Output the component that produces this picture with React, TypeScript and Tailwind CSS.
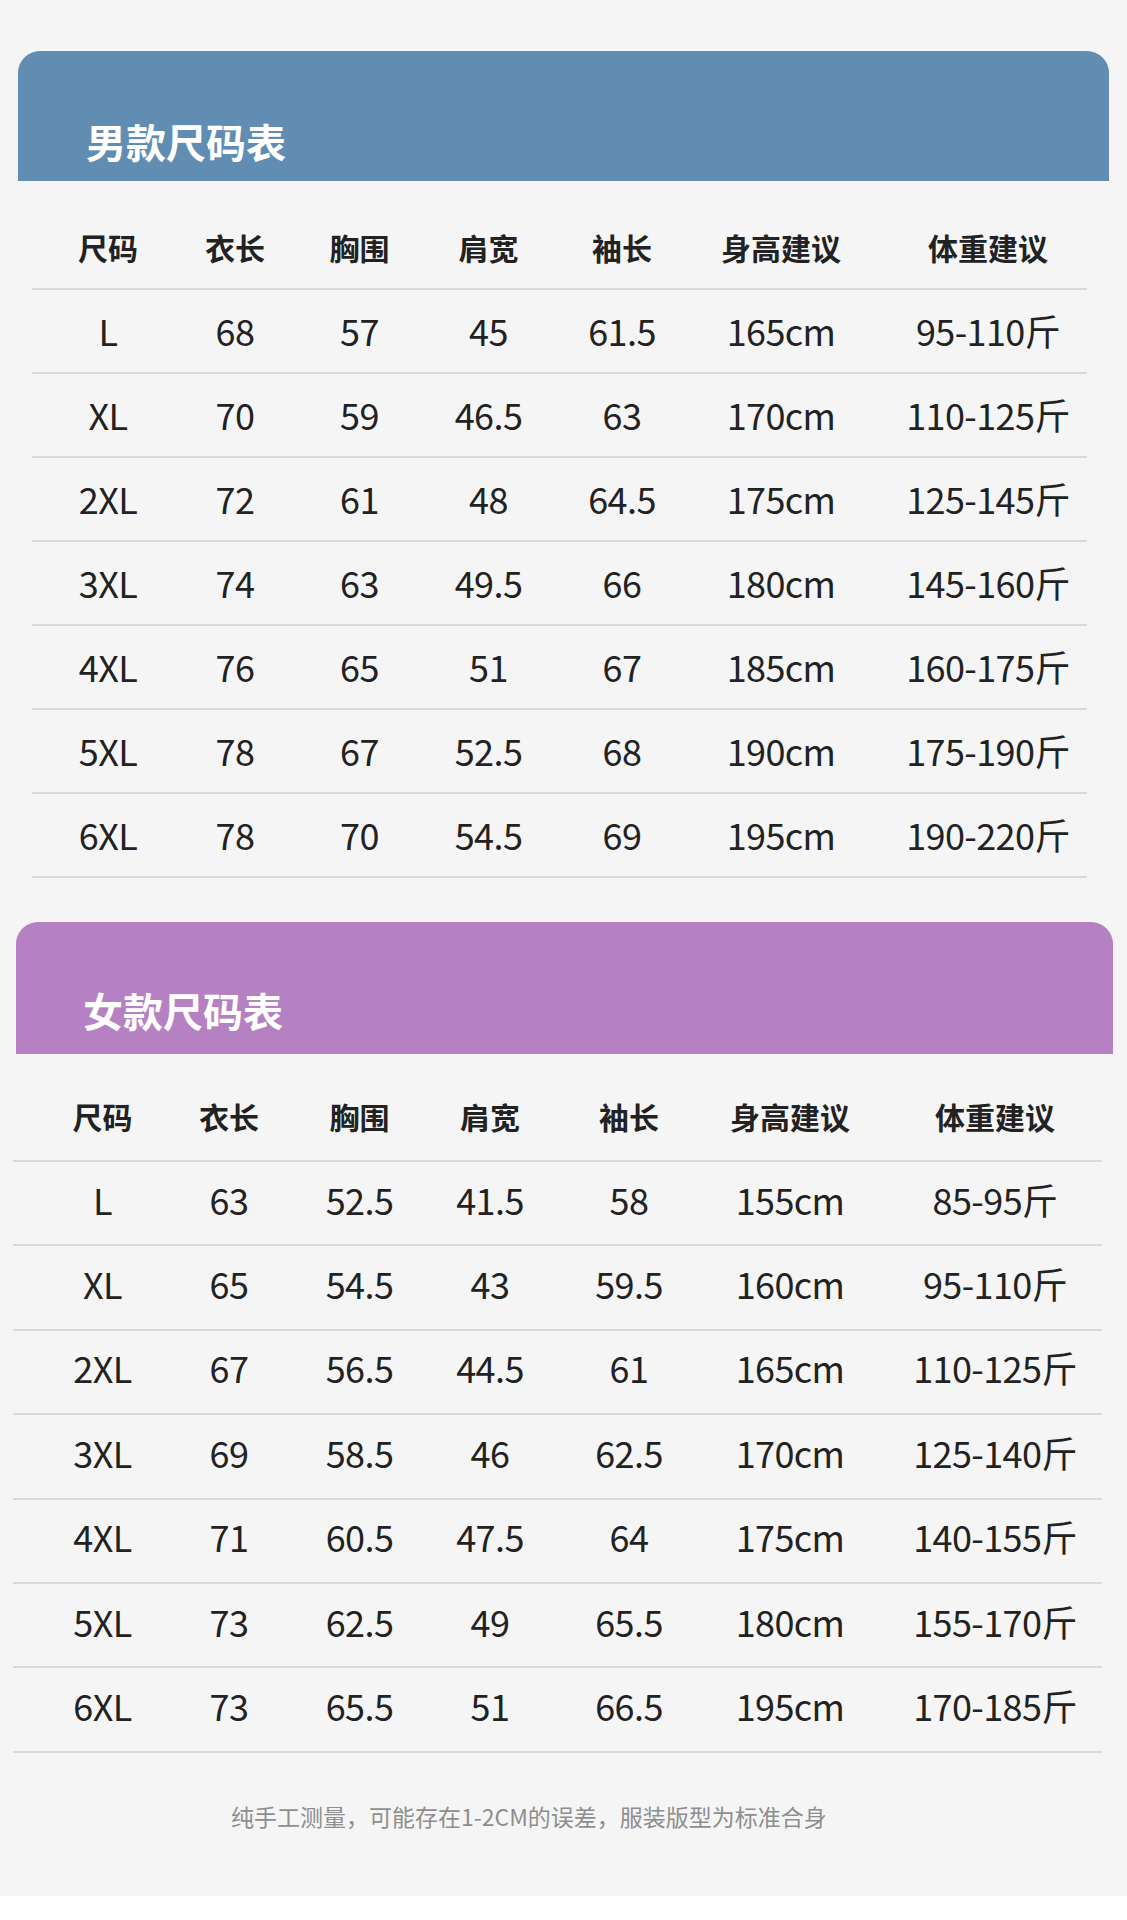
import React from 'react';

type Row = string[];

const headers = ['尺码', '衣长', '胸围', '肩宽', '袖长', '身高建议', '体重建议'];

const menRows: Row[] = [
  ['L', '68', '57', '45', '61.5', '165cm', '95-110斤'],
  ['XL', '70', '59', '46.5', '63', '170cm', '110-125斤'],
  ['2XL', '72', '61', '48', '64.5', '175cm', '125-145斤'],
  ['3XL', '74', '63', '49.5', '66', '180cm', '145-160斤'],
  ['4XL', '76', '65', '51', '67', '185cm', '160-175斤'],
  ['5XL', '78', '67', '52.5', '68', '190cm', '175-190斤'],
  ['6XL', '78', '70', '54.5', '69', '195cm', '190-220斤'],
];

const womenRows: Row[] = [
  ['L', '63', '52.5', '41.5', '58', '155cm', '85-95斤'],
  ['XL', '65', '54.5', '43', '59.5', '160cm', '95-110斤'],
  ['2XL', '67', '56.5', '44.5', '61', '165cm', '110-125斤'],
  ['3XL', '69', '58.5', '46', '62.5', '170cm', '125-140斤'],
  ['4XL', '71', '60.5', '47.5', '64', '175cm', '140-155斤'],
  ['5XL', '73', '62.5', '49', '65.5', '180cm', '155-170斤'],
  ['6XL', '73', '65.5', '51', '66.5', '195cm', '170-185斤'],
];

const font = { fontFamily: '"Noto Sans CJK SC", "Noto Sans", sans-serif' };

interface TableProps {
  rows: Row[];
  cols: string; // grid template class, written out in full
  rowH: string;
  rowPb: string;
  headerH: string;
  headerPt: string;
}

const SizeTable: React.FC<TableProps> = ({ rows, cols, rowH, rowPb, headerH, headerPt }) => (
  <div>
    {/* Header */}
    <div className={`${headerH} border-b-2 border-[#dadada]`}>
      <div className={`grid ${cols} ${headerPt}`}>
        {headers.map((h) => (
          <div key={h} className="flex justify-center whitespace-nowrap text-[30px] leading-[30px] font-bold text-[#222]">
            {h}
          </div>
        ))}
      </div>
    </div>

    {/* Body */}
    {rows.map((r) => (
      <div key={r[0]} className={`${rowH} border-b-2 border-[#dadada]`}>
        <div className={`grid ${cols} h-full items-center ${rowPb}`}>
          {r.map((c, i) => (
            <div key={i} className="flex justify-center whitespace-nowrap text-[36px] leading-none text-[#222] tracking-[-0.6px]">
              {c}
            </div>
          ))}
        </div>
      </div>
    ))}
  </div>
);

export default function App() {
  return (
    <div style={font} className="w-[1127px] bg-white">
      <div className="bg-[#f5f5f5] pt-[51px] pb-[68px]">
        {/* Men */}
        <div className="ml-[18px] w-[1091px] h-[130px] rounded-t-[22px] bg-[#618db2] flex items-end pl-[68px] pb-[20px]">
          <span className="text-white text-[40px] leading-[40px] font-bold">男款尺码表</span>
        </div>
        <div className="ml-[32px] w-[1055px]">
          <SizeTable
            rows={menRows}
            cols="grid-cols-[152px_102px_147px_111px_156px_162px_252px]"
            headerH="h-[109px]"
            headerPt="pt-[51px]"
            rowH="h-[84px]"
            rowPb="pb-[3px]"
          />
        </div>

        {/* Women */}
        <div className="mt-[44px] ml-[16px] w-[1097px] h-[132px] rounded-t-[22px] bg-[#b681c3] flex items-end pl-[67px] pb-[24px]">
          <span className="text-white text-[40px] leading-[40px] font-bold">女款尺码表</span>
        </div>
        <div className="ml-[13px] w-[1089px]">
          <SizeTable
            rows={womenRows}
            cols="grid-cols-[179px_74px_187px_74px_204px_118px_292px]"
            headerH="h-[108px]"
            headerPt="pt-[47px]"
            rowH="h-[84.4px]"
            rowPb="pb-[9px]"
          />
        </div>

        {/* Footnote */}
        <div className="mt-[51px] pl-[231px] text-[23px] leading-[24px] text-[#8e8e8e]">
          纯手工测量，可能存在1-2CM的误差，服装版型为标准合身
        </div>
      </div>
      <div className="h-[25px]" />
    </div>
  );
}
